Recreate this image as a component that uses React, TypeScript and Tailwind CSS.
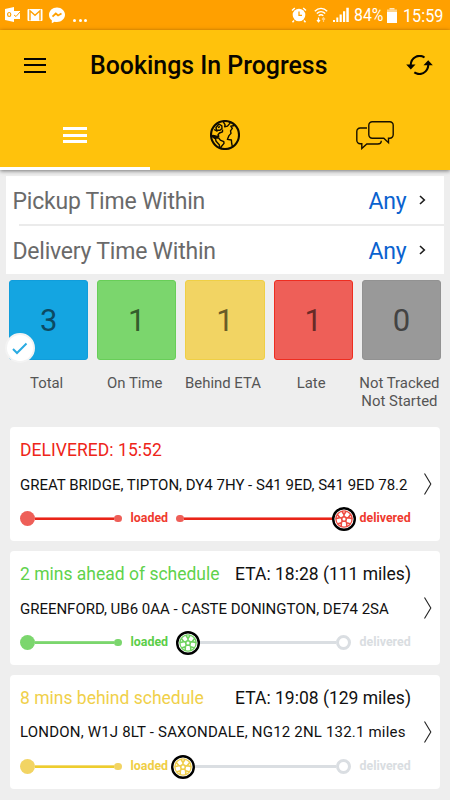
import type { ReactNode } from 'react';
import clsx from 'clsx';

type Tone = 'red' | 'green' | 'yellow';

interface Booking {
  id: number;
  tone: Tone;
  status: string;
  statusClass?: string;
  eta?: string;
  route: string;
  routeClass: string;
  // wheel centre, px from the left of the second leg
  progress: number;
}

const TONES: Record<Tone, { text: string; label: string; dot: string; line: string; wheel: string }> = {
  red: {
    text: 'text-[#ee2519]',
    label: 'text-[#ef3a2d]',
    dot: 'bg-[#ee5f58]',
    line: 'bg-[#e92417] border-[#f3827c]',
    wheel: '#ee4a40',
  },
  green: {
    text: 'text-[#5fd24c]',
    label: 'text-[#5bce48]',
    dot: 'bg-[#7bd66d]',
    line: 'bg-[#7bd66d] border-[#8fdc83]',
    wheel: '#6fd25f',
  },
  yellow: {
    text: 'text-[#f0d04a]',
    label: 'text-[#efce45]',
    dot: 'bg-[#f2d463]',
    line: 'bg-[#edcd2e] border-[#f3da76]',
    wheel: '#efcd4a',
  },
};

const TILES = [
  { label: ['Total'], count: 3, box: 'bg-[#14a5e1] border-[#109ddb] text-[#0c4a63]', selected: true },
  { label: ['On Time'], count: 1, box: 'bg-[#7bd66d] border-[#68ce58] text-[#335d2c]' },
  { label: ['Behind ETA'], count: 1, box: 'bg-[#f2d463] border-[#efcf45] text-[#6a5c28]' },
  { label: ['Late'], count: 1, box: 'bg-[#ee5f58] border-[#ee2d20] text-[#682a27]' },
  { label: ['Not Tracked', 'Not Started'], count: 0, box: 'bg-[#999999] border-[#929292] text-[#434343]' },
];

const BOOKINGS: Booking[] = [
  {
    id: 1,
    tone: 'red',
    status: 'DELIVERED: 15:52',
    statusClass: 'tracking-[0.05px]',
    route: 'GREAT BRIDGE, TIPTON, DY4 7HY - S41 9ED, S41 9ED 78.2',
    routeClass: 'pt-[2px]',
    progress: 168,
  },
  {
    id: 2,
    tone: 'green',
    status: '2 mins ahead of schedule',
    eta: 'ETA: 18:28 (111 miles)',
    route: 'GREENFORD, UB6 0AA - CASTE DONINGTON, DE74 2SA',
    routeClass: 'pt-[2px] tracking-[-0.02px]',
    progress: 12,
  },
  {
    id: 3,
    tone: 'yellow',
    status: '8 mins behind schedule',
    eta: 'ETA: 19:08 (129 miles)',
    route: 'LONDON, W1J 8LT - SAXONDALE, NG12 2NL 132.1 miles',
    routeClass: 'tracking-[0.19px]',
    progress: 7,
  },
];

function StatusBar() {
  return (
    <div className="flex h-[30px] items-center bg-[#ffa000] text-white">
      <svg width="16" height="16" viewBox="0 0 16 16" className="ml-[5px]">
        <path d="M0 2 9 0v15L0 13z" fill="#fff" />
        <path d="M9 4h6v8H9" fill="#fff" />
        <path d="m9 8 2 1.5L15 5" stroke="#ffa000" strokeWidth="1" fill="none" />
        <ellipse cx="4.2" cy="7.5" rx="1.6" ry="2" fill="none" stroke="#ffa000" strokeWidth="1.2" />
      </svg>
      <svg width="16" height="14" viewBox="0 0 16 14" className="ml-[6px]">
        <rect x=".5" y=".9" width="15" height="12" rx="1" fill="#fff" />
        <path d="M3 12.5V2.8L8 7.2l5-4.4v9.7" stroke="#ffa000" strokeWidth="1.4" fill="none" />
      </svg>
      <svg width="16" height="17" viewBox="0 0 16 17" className="ml-[6px]">
        <path d="M8 .5C3.5.5 0 3.700 0 7.800c0 2.300 1 4.200 2.800 5.500v3l2.700-1.600c.8.2 1.600.3 2.500.3 4.500 0 8-3.200 8-7.200S12.500.5 8 .5z" fill="#fff" />
        <path d="m3.500 9.700 3.300-3.200 2.300 2 3.400-2" stroke="#ffa000" strokeWidth="1.8" fill="none" />
      </svg>
      <span className="ml-[8px] flex gap-[2.5px] pt-[11px]">
        <i className="size-[3px] rounded-full bg-white" />
        <i className="size-[3px] rounded-full bg-white" />
        <i className="size-[3px] rounded-full bg-white" />
      </span>

      <svg width="16" height="16" viewBox="0 0 16 16" className="ml-auto">
        <circle cx="8" cy="8" r="6.3" fill="#fff" />
        <path d="M1 3.5 3.8 1M15 3.5 12.2 1M3 13.5l-1.5 1.7M13 13.5l1.5 1.7" stroke="#fff" strokeWidth="1.5" />
        <path d="M8 4.5V8.300h3" stroke="#ffa000" strokeWidth="1.3" fill="none" />
      </svg>
      <svg width="14" height="16" viewBox="0 0 14 16" className="ml-[7px]" fill="none" stroke="#fff">
        <path d="M.8 4.200C4.500.4 9.500.4 13.200 4.200M2.800 6.500c2.500-2.500 5.900-2.500 8.400 0M4.700 8.700c1.500-1.300 3.100-1.300 4.600 0" strokeWidth="1.4" />
        <path d="M4.500 10.500v4M3 13l1.500 1.800L6 13" strokeWidth="1.2" />
        <path d="M9.500 15v-4M8 12.500l1.500-1.800 1.500 1.800" strokeWidth="1.2" opacity=".5" />
      </svg>
      <svg width="16" height="16" viewBox="0 0 16 16" className="ml-[5px]" fill="#fff">
        <path d="M0 15v-2h2v2zM3.300 15v-4.500h2V15zM6.600 15V7.500h2.200V15zM10 15V4.200h2.200V15zM13.300 15V.8h2.500V15z" />
      </svg>
      <span className="ml-[5px] w-[30px] origin-left scale-x-[.88] text-[18px] leading-[30px]">84%</span>
      <svg width="10" height="15" viewBox="0 0 10 15" className="ml-[3px]" fill="#fff">
        <path d="M2.500 0h5v1.500h-5z" opacity=".75" />
        <path d="M0 1.500h10V5H0z" opacity=".55" />
        <path d="M0 4h10v11H0z" />
      </svg>
      <span className="mr-[6px] ml-[6px] w-[41px] origin-left scale-x-[.9] pt-px text-[18px] leading-[30px]">15:59</span>
    </div>
  );
}

function GlobeIcon() {
  return (
    <svg width="30" height="30" viewBox="0 0 30 30" fill="none" stroke="#100c00" strokeWidth="1.4" strokeLinejoin="round">
      <circle cx="15" cy="15" r="14" strokeWidth="2.1" />
      <path d="M8.500 4.500 6 7.500l.5 2.500 3.500.3 2-1.800-.2-2.700-2-1.300zM8 7.500l2-.8M4 9.500l3.500 2" />
      <path d="m13 1.300 2 3.300-.3 2.200 2.800-.7 2.600-3-1-1.700" />
      <path d="M12.500 9.500v2.300l-3 1.200-1.500 1.800.8 1.400-2.500.6L4 15.800 1.300 16l3.500 2.300 3.700-.5 1.800 2.300 3.500 1.600.2 1.700-3 3.600-.3 1.500" />
      <path d="m1.300 15 3.800 2.500 1 3.800 3.200 3.500.5 3" />
      <path d="m24.500 5.500-3.700.7 1.500 2.200-1.800 2.400.5 2.600-2 2.200-1.600 3.800 4 .6.300 3.700.8 3.300" />
      <path d="M7 16.500 3 15.500l1.500 2z" fill="#100c00" />
    </svg>
  );
}

function ChatIcon() {
  return (
    <svg width="38" height="29" viewBox="0 0 38 29" fill="none" stroke="#171000" strokeWidth="1.4">
      <path d="M16.200.8h17.600a3.400 3.400 0 0 1 3.400 3.400v9.600a3.400 3.400 0 0 1-3.400 3.400H32.500v4.500l-4.700-4.500H16.200a3.400 3.400 0 0 1-3.400-3.400V4.200A3.400 3.400 0 0 1 16.200.8z" />
      <path d="M11 7H4.200A3.400 3.400 0 0 0 .8 10.400v8.900a3.400 3.400 0 0 0 3.400 3.400h1.600v4.800l5-4.500h10.900c2.200 0 3.600-1.200 3.600-3.200" />
    </svg>
  );
}

function SyncIcon() {
  return (
    <svg width="27" height="20" viewBox="0 0 27 20" fill="none" stroke="#090700" strokeWidth="2.1">
      <path d="M18.500 2.500C13-1.200 5.200 2 4.700 10" />
      <path d="M8.300 17.400C14 21.200 21.800 18 22.300 10" />
      <path d="M.2 9.500h9.300L4.800 14.500zM17.500 10.300h9.300L22.200 5.300z" fill="#090700" stroke="none" />
    </svg>
  );
}

function Tab({ active, children }: { active?: boolean; children: ReactNode }) {
  return (
    <button className={clsx('flex h-[70px] flex-1 items-center justify-center border-b-[3px]', active ? 'border-white' : 'border-transparent')}>
      {children}
    </button>
  );
}

function Header() {
  return (
    <header className="relative h-[140px] bg-[#ffc20c] shadow-[0_1px_4px_rgba(0,0,0,0.5)]">
      <div className="flex h-[70px] items-center pr-[17px] pl-[24px]">
        <button className="flex w-[22px] flex-col gap-[4.5px]">
          <i className="h-[2px] bg-[#080600]" />
          <i className="h-[2px] bg-[#080600]" />
          <i className="h-[2px] bg-[#080600]" />
        </button>
        <h1 className="ml-[44px] pt-[2px] text-[24.9px] font-medium whitespace-nowrap text-[#080600]">Bookings In Progress</h1>
        <button className="ml-auto">
          <SyncIcon />
        </button>
      </div>
      <nav className="flex">
        <Tab active>
          <span className="flex w-[24px] flex-col gap-[3.5px] pt-[3px]">
            <i className="h-[3px] bg-white" />
            <i className="h-[3px] bg-white" />
            <i className="h-[3px] bg-white" />
          </span>
        </Tab>
        <Tab>
          <span className="pt-[3px]">
            <GlobeIcon />
          </span>
        </Tab>
        <Tab>
          <span className="pt-[3px]">
            <ChatIcon />
          </span>
        </Tab>
      </nav>
    </header>
  );
}

function FilterRow({ label }: { label: string }) {
  return (
    <button className="flex h-[48px] w-full items-center pr-[18px] pl-[6.5px] text-[23px] tracking-[-0.22px] whitespace-nowrap">
      <span className="pt-[4px] text-[#6a6a6a]">{label}</span>
      <span className="ml-auto pt-[4px] text-[#0a62cf]">Any</span>
      <svg width="7" height="10" viewBox="0 0 7 10" className="ml-[12.5px]" fill="none" stroke="#1c1c1c" strokeWidth="1.6">
        <path d="m1 1 4.300 4L1 9" />
      </svg>
    </button>
  );
}

function Tiles() {
  return (
    <div className="mt-[6px] grid h-[147px] grid-cols-5 gap-x-[9px] px-[9px]">
      {TILES.map(tile => (
        <div key={tile.label[0]} className="relative flex flex-col items-center">
          <div className={clsx('flex h-[79.5px] w-full items-center justify-center rounded-[3px] border pt-[3px] text-[31px]', tile.box)}>
            {tile.count}
          </div>
          {tile.selected && (
            <span className="absolute top-[53px] left-[-4px] flex size-[30px] items-center justify-center rounded-full border-2 border-[#f3f3f3] bg-white">
              <svg width="16" height="13" viewBox="0 0 16 13" fill="none" stroke="#2aabe2" strokeWidth="2">
                <path d="m1 7 4 4L14.500 1.500" />
              </svg>
            </span>
          )}
          <div className="mt-[15.5px] mr-[4px] text-center text-[14.9px] leading-[17.5px] whitespace-nowrap text-[#555]">
            {tile.label.map(line => (
              <p key={line}>{line}</p>
            ))}
          </div>
        </div>
      ))}
    </div>
  );
}

function Wheel({ color }: { color: string }) {
  return (
    <svg width="24" height="24" viewBox="-12 -12 24 24" fill="none">
      <circle r="10.8" fill="#fff" stroke="#000" strokeWidth="2.4" />
      <circle r="8.1" stroke={color} strokeWidth="1.3" />
      {[0, 72, 144, 216, 288].map(angle => (
        <g key={angle} transform={`rotate(${angle})`}>
          <path d="M0-2v-2.500L-2.300-8M0-4.500 2.300-8" stroke={color} strokeWidth="1.6" />
        </g>
      ))}
      <circle r="2.3" fill="#fff" stroke={color} strokeWidth="1.6" />
    </svg>
  );
}

function Track({ tone, progress }: { tone: Tone; progress: number }) {
  const colors = TONES[tone];
  const done = progress > 160;

  return (
    <div className="flex h-[24px] items-center text-[12.4px] font-bold">
      <span className={clsx('size-[15px] rounded-full', colors.dot)} />
      <span className={clsx('h-[3px] w-[79px] border-t', colors.line)} />
      <span className={clsx('size-[7.5px] rounded-full', colors.dot)} />
      <span className={clsx('ml-[9px] w-[45px]', colors.label)}>loaded</span>
      <div className="relative flex h-[24px] w-[179px] items-center">
        {done ? (
          <>
            <span className={clsx('ml-[0.5px] size-[7.5px] rounded-full', colors.dot)} />
            <span className={clsx('h-[3px] flex-1 border-t', colors.line)} />
          </>
        ) : (
          <>
            <span className="ml-[10px] h-[3px] flex-1 bg-[#dadee2]" />
            <span className="mr-[4px] size-[15px] rounded-full border-[3px] border-[#dadee2] bg-white" />
          </>
        )}
        <span className="absolute top-0 -translate-x-1/2" style={{ left: progress }}>
          <Wheel color={colors.wheel} />
        </span>
      </div>
      <span className={clsx('ml-[5px]', done ? colors.label : 'text-[#d9dde1]')}>delivered</span>
    </div>
  );
}

function BookingCard({ booking }: { booking: Booking }) {
  return (
    <article className="h-[114px] rounded-[4px] bg-white pt-[11px] pl-[10px] whitespace-nowrap">
      <div className="flex h-[24px] items-center justify-between pr-[29px] text-[17.5px]">
        <span className={clsx(TONES[booking.tone].text, booking.statusClass)}>{booking.status}</span>
        {booking.eta && <span className="text-[#111]">{booking.eta}</span>}
      </div>
      <div className="mt-[10px] flex h-[24px] items-center justify-between pr-[8px]">
        <span className={clsx('text-[15px] text-[#111]', booking.routeClass)}>{booking.route}</span>
        <svg width="9" height="22" viewBox="0 0 9 22" fill="none" stroke="#222" strokeWidth="1.1">
          <path d="M1.500.5 7.800 11 1.500 21.500" />
        </svg>
      </div>
      <div className="mt-[10.5px]">
        <Track tone={booking.tone} progress={booking.progress} />
      </div>
    </article>
  );
}

export default function App() {
  return (
    <div className="h-[800px] w-[450px] overflow-hidden bg-[#eeeeee] font-['Roboto',sans-serif]">
      <StatusBar />
      <Header />
      <section className="mx-[6px] mt-[6px] h-[98px] bg-white">
        <FilterRow label="Pickup Time Within" />
        <div className="ml-[13px] h-[2px] bg-[#ebebeb]" />
        <FilterRow label="Delivery Time Within" />
      </section>
      <Tiles />
      <main className="flex flex-col gap-[10px] px-[10px]">
        {BOOKINGS.map(booking => (
          <BookingCard key={booking.id} booking={booking} />
        ))}
      </main>
    </div>
  );
}
